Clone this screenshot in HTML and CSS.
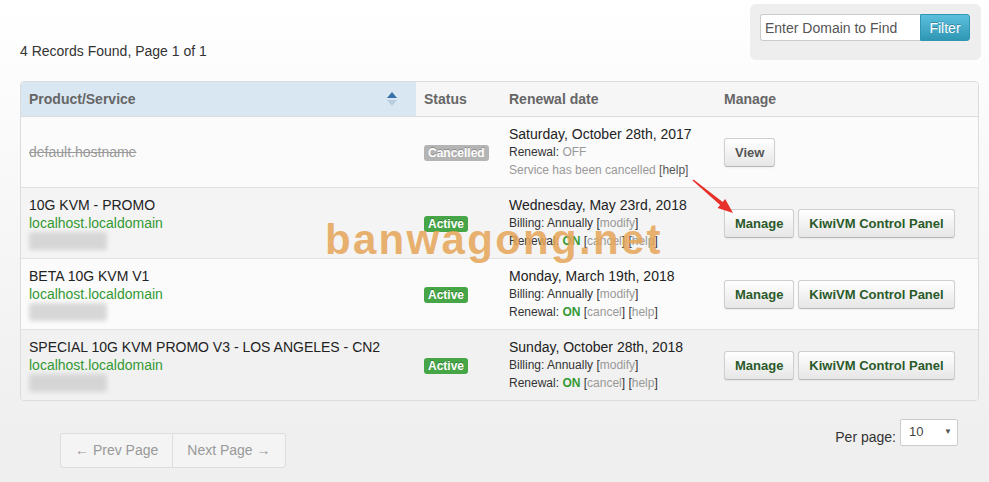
FILE: index.html
```html
<!DOCTYPE html>
<html lang="en">
<head>
  <meta charset="UTF-8">
  <meta name="viewport" content="width=device-width, initial-scale=1.0">
  <title>My Products &amp; Services</title>
  <link rel="stylesheet" href="styles.css">
</head>
<body>
<div class="container">
  <div class="topbar">
    <p class="records">4 Records Found, Page 1 of 1</p>
    <form class="filter-box">
      <input type="text" class="filter-input" placeholder="Enter Domain to Find">
      <button type="button" class="btn-filter">Filter</button>
    </form>
  </div>

  <div class="table-wrap">
    <table class="services">
      <thead>
        <tr>
          <th class="col-product sorted">
            Product/Service
            <span class="sort-icon"><span class="up"></span><span class="down"></span></span>
          </th>
          <th class="col-status">Status</th>
          <th class="col-date">Renewal date</th>
          <th class="col-manage">Manage</th>
        </tr>
      </thead>
      <tbody>
        <tr>
          <td><span class="host-cancelled">default.hostname</span></td>
          <td><span class="label label-cancelled">Cancelled</span></td>
          <td>
            <div class="date">Saturday, October 28th, 2017</div>
            <div class="small">Renewal: <span class="muted">OFF</span></div>
            <div class="small muted">Service has been cancelled <span class="dark">[help]</span></div>
          </td>
          <td><a class="btn btn-view">View</a></td>
        </tr>
        <tr>
          <td>
            <div class="product">10G KVM - PROMO</div>
            <div class="host">localhost.localdomain</div>
            <div class="blur"></div>
          </td>
          <td><span class="label label-active">Active</span></td>
          <td>
            <div class="date">Wednesday, May 23rd, 2018</div>
            <div class="small">Billing: Annually [<span class="muted">modify</span>]</div>
            <div class="small">Renewal: <span class="on">ON</span> [<span class="muted">cancel</span>] [<span class="muted">help</span>]</div>
          </td>
          <td><a class="btn">Manage</a> <a class="btn">KiwiVM Control Panel</a></td>
        </tr>
        <tr>
          <td>
            <div class="product">BETA 10G KVM V1</div>
            <div class="host">localhost.localdomain</div>
            <div class="blur"></div>
          </td>
          <td><span class="label label-active">Active</span></td>
          <td>
            <div class="date">Monday, March 19th, 2018</div>
            <div class="small">Billing: Annually [<span class="muted">modify</span>]</div>
            <div class="small">Renewal: <span class="on">ON</span> [<span class="muted">cancel</span>] [<span class="muted">help</span>]</div>
          </td>
          <td><a class="btn">Manage</a> <a class="btn">KiwiVM Control Panel</a></td>
        </tr>
        <tr>
          <td>
            <div class="product">SPECIAL 10G KVM PROMO V3 - LOS ANGELES - CN2</div>
            <div class="host">localhost.localdomain</div>
            <div class="blur"></div>
          </td>
          <td><span class="label label-active">Active</span></td>
          <td>
            <div class="date">Sunday, October 28th, 2018</div>
            <div class="small">Billing: Annually [<span class="muted">modify</span>]</div>
            <div class="small">Renewal: <span class="on">ON</span> [<span class="muted">cancel</span>] [<span class="muted">help</span>]</div>
          </td>
          <td><a class="btn">Manage</a> <a class="btn">KiwiVM Control Panel</a></td>
        </tr>
      </tbody>
    </table>
  </div>

  <div class="footer">
    <div class="pager">
      <a class="page-link">&larr; Prev Page</a><a class="page-link">Next Page &rarr;</a>
    </div>
    <div class="per-page">
      Per page:
      <span class="select">10<span class="caret">&#9660;</span></span>
    </div>
  </div>

  <div class="watermark">banwagong.net</div>
  <svg class="arrow" width="48" height="42" viewBox="0 0 48 42">
    <polygon points="3.5,3.4 32.7,25.9 35.2,22.9 43,37 27.6,32.1 30.1,29 2.5,4.6" fill="#e8302a"></polygon>
  </svg>
</div>
</body>
</html>
```

FILE: styles.css
```css
body {
  margin: 0;
  padding: 0;
  min-height: 482px;
  font-family: "Liberation Sans", Arial, sans-serif;
  font-size: 14px;
  line-height: 18px;
  color: #222;
  background: linear-gradient(#ffffff, #efefef 90%);
}

.container {
  position: relative;
  padding: 0 10px 0 20px;
}

.topbar {
  display: flex;
  justify-content: space-between;
  align-items: flex-start;
  height: 77px;
  padding-top: 4px;
}

.records {
  margin: 38px 0 0;
  color: #333;
}

.filter-box {
  display: flex;
  margin: 0 -2px 0 0;
  padding: 10px 11px 19px 10px;
  background-color: #eeeeee;
  border-radius: 6px;
}

.filter-input {
  width: 160px;
  height: 27px;
  box-sizing: border-box;
  padding: 0 4px;
  border: 1px solid #ccc;
  border-right: none;
  border-radius: 3px 0 0 3px;
  font-family: inherit;
  font-size: 14px;
  color: #555;
}

.filter-input::placeholder {
  color: #555;
}

.btn-filter {
  width: 50px;
  height: 27px;
  border: 1px solid #2f96b4;
  border-radius: 0 3px 3px 0;
  background: linear-gradient(#5bc0de, #2f96b4);
  color: #fff;
  font-family: inherit;
  font-size: 14px;
  text-shadow: 0 -1px 0 rgba(0,0,0,0.25);
  padding: 0;
}

.table-wrap {
  border: 1px solid #dcdcdc;
  border-radius: 4px;
  overflow: hidden;
}

.services {
  width: 100%;
  border-collapse: collapse;
}

.services th {
  height: 34px;
  padding: 0 8px;
  text-align: left;
  font-weight: bold;
  color: #666;
  background-color: #f6f6f6;
  border-bottom: 1px solid #dcdcdc;
}

.col-product { width: 379px; }
.col-status { width: 68px; }
.col-date { width: 198px; padding-left: 9px !important; }
.col-manage { padding-left: 9px !important; }

.services th.sorted {
  position: relative;
  background-color: #d9e7f3;
}

.sort-icon {
  position: absolute;
  right: 19px;
  top: 10px;
  display: flex;
  flex-direction: column;
  gap: 2px;
}

.sort-icon .up {
  border-left: 5px solid transparent;
  border-right: 5px solid transparent;
  border-bottom: 6px solid #3a70a8;
}

.sort-icon .down {
  border-left: 5px solid transparent;
  border-right: 5px solid transparent;
  border-top: 6px solid #b9cde0;
}

.services td {
  height: 54px;
  padding: 8px;
  vertical-align: middle;
  border-top: 1px solid #e2e2e2;
}

.services td:nth-child(3),
.services td:nth-child(4) {
  padding-left: 9px;
}

.services tbody tr:nth-child(odd) { background-color: #fbfbfb; }
.services tbody tr:nth-child(even) { background-color: #f4f4f4; }
.services tbody tr:nth-child(4) { background-color: #f1f1f1; }

.host-cancelled {
  color: #999;
  text-decoration: line-through;
}

.product {
  color: #222;
}

.host {
  color: #339933;
}

.blur {
  width: 78px;
  height: 18px;
  background-color: #cfcfcf;
  border-radius: 3px;
  filter: blur(2px);
  opacity: 0.8;
}

.label {
  display: inline-block;
  padding: 0 4px;
  font-size: 12px;
  font-weight: bold;
  line-height: 16px;
  color: #fff;
  border-radius: 3px;
  text-shadow: 0 -1px 0 rgba(0,0,0,0.25);
}

.label-active { background-color: #46a546; }
.label-cancelled { background-color: #b4b4b4; }

.date {
  font-size: 14px;
  color: #222;
}

.small {
  font-size: 12px;
  color: #333;
}

.muted { color: #999; }
.dark { color: #555; }

.on {
  color: #339933;
  font-weight: bold;
}

.btn {
  display: inline-block;
  height: 27px;
  padding: 0 10px;
  line-height: 27px;
  font-size: 13px;
  font-weight: bold;
  color: #2a5a2a;
  background: linear-gradient(#ffffff, #e6e6e6);
  border: 1px solid #cfcfcf;
  border-bottom-color: #b8b8b8;
  border-radius: 3px;
  box-shadow: inset 0 1px 0 rgba(255,255,255,0.2), 0 1px 2px rgba(0,0,0,0.05);
  cursor: pointer;
}

.btn-view {
  color: #555;
}

.footer {
  display: flex;
  justify-content: space-between;
  align-items: flex-start;
  padding: 18px 21px 0 40px;
}

.pager {
  display: flex;
  margin-top: 14px;
}

.page-link {
  display: inline-block;
  height: 33px;
  line-height: 33px;
  padding: 0 14px;
  color: #999;
  background-color: #f4f4f4;
  border: 1px solid #dddddd;
}

.page-link + .page-link {
  border-left: none;
}

.page-link:first-child { border-radius: 3px 0 0 3px; }
.page-link:last-child { border-radius: 0 3px 3px 0; }

.per-page {
  display: flex;
  align-items: center;
  gap: 4px;
  margin-top: 9px;
  color: #333;
}

.select {
  display: inline-flex;
  justify-content: space-between;
  align-items: center;
  width: 58px;
  height: 27px;
  box-sizing: border-box;
  padding: 0 5px 0 8px;
  margin-top: -10px;
  background-color: #fff;
  border: 1px solid #ccc;
  border-radius: 2px;
  font-size: 13px;
  color: #444;
}

.caret {
  font-size: 8px;
  color: #555;
}

.watermark {
  position: absolute;
  left: 325px;
  top: 219px;
  font-size: 42px;
  font-weight: bold;
  line-height: 42px;
  letter-spacing: 2.3px;
  color: rgba(229, 164, 86, 0.85);
  pointer-events: none;
}

.arrow {
  position: absolute;
  left: 690px;
  top: 176px;
}
```
